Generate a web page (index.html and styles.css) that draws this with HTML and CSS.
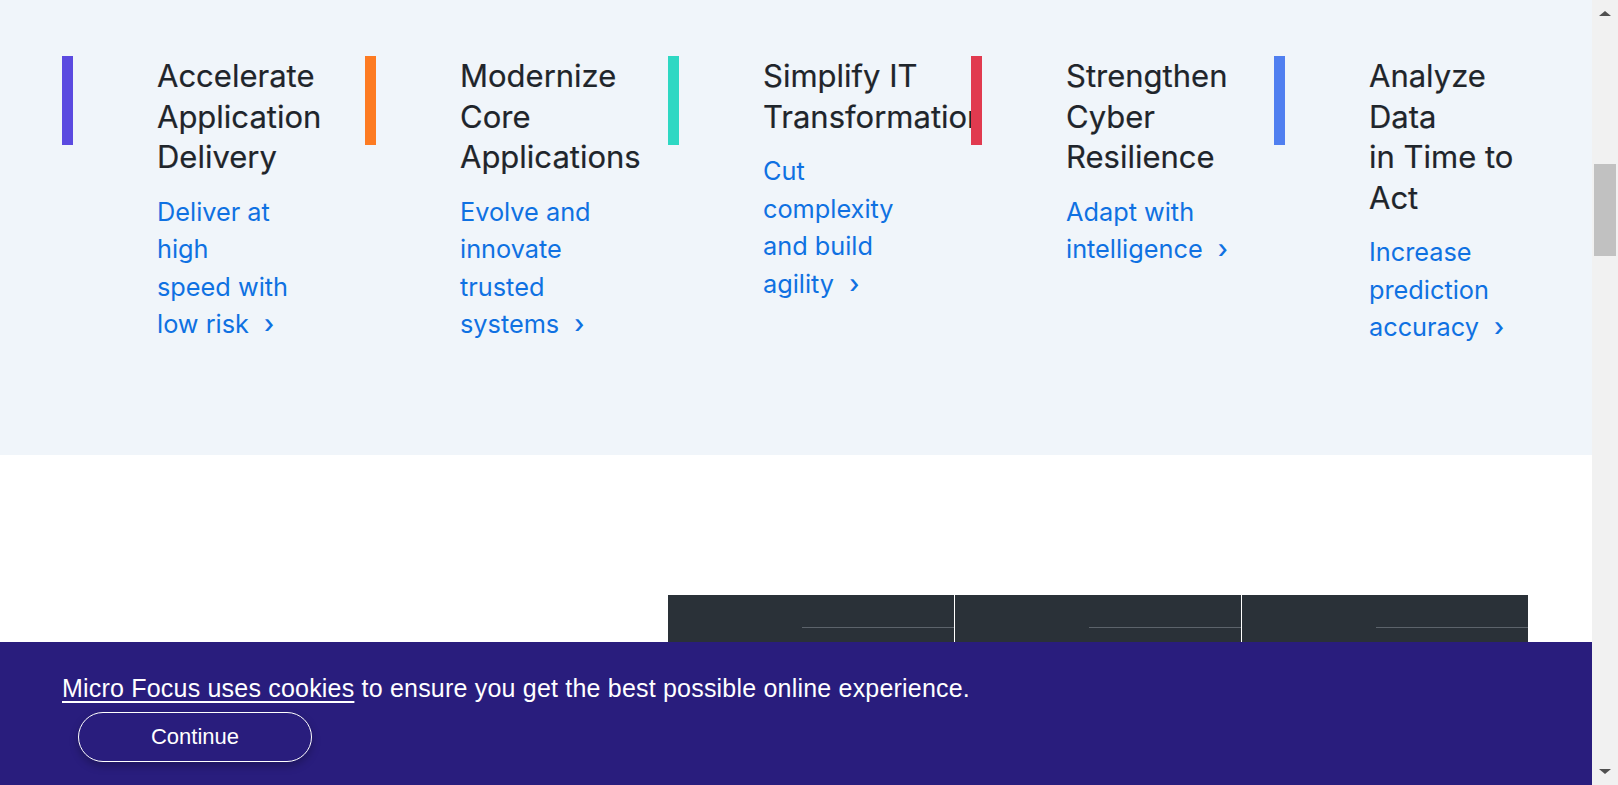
FILE: index.html
```html
<!DOCTYPE html>
<html lang="en">
<head>
<meta charset="utf-8">
<title>Micro Focus</title>
<link rel="stylesheet" href="styles.css">
</head>
<body>
<div class="app">
  <div class="page">
    <section class="features">
      <div class="col">
        <span class="bar bar-purple"></span>
        <div class="text">
          <h3 class="title">Accelerate<br>Application<br>Delivery</h3>
          <a class="link">Deliver at<br>high<br>speed with<br>low risk <span class="chev">›</span></a>
        </div>
      </div>
      <div class="col">
        <span class="bar bar-orange"></span>
        <div class="text">
          <h3 class="title">Modernize<br>Core<br>Applications</h3>
          <a class="link">Evolve and<br>innovate<br>trusted<br>systems <span class="chev">›</span></a>
        </div>
      </div>
      <div class="col">
        <span class="bar bar-teal"></span>
        <div class="text">
          <h3 class="title">Simplify IT<br>Transformation</h3>
          <a class="link">Cut<br>complexity<br>and build<br>agility <span class="chev">›</span></a>
        </div>
      </div>
      <div class="col">
        <span class="bar bar-red"></span>
        <div class="text">
          <h3 class="title">Strengthen<br>Cyber<br>Resilience</h3>
          <a class="link">Adapt with<br>intelligence <span class="chev">›</span></a>
        </div>
      </div>
      <div class="col">
        <span class="bar bar-blue"></span>
        <div class="text">
          <h3 class="title">Analyze<br>Data<br>in Time to<br>Act</h3>
          <a class="link">Increase<br>prediction<br>accuracy <span class="chev">›</span></a>
        </div>
      </div>
    </section>
    <section class="lower">
      <div class="cards">
        <div class="card"><span class="rule"></span></div>
        <div class="card"><span class="rule"></span></div>
        <div class="card"><span class="rule"></span></div>
      </div>
    </section>
    <div class="cookie">
      <p class="cookie-text"><a class="cookie-link">Micro Focus uses cookies</a> to ensure you get the best possible online experience.</p>
      <button class="continue">Continue</button>
    </div>
  </div>
  <div class="scrollbar">
    <span class="arrow arrow-up"></span>
    <div class="track"><span class="thumb"></span></div>
    <span class="arrow arrow-down"></span>
  </div>
</div>
</body>
</html>
```
FILE: styles.css
```css
* { box-sizing: border-box; }
html, body {
  margin: 0;
  padding: 0;
  height: 100%;
  overflow: hidden;
}
body {
  font-family: Inter, "Noto Sans", sans-serif;
  background: #ffffff;
}
.app {
  display: flex;
  height: 785px;
  width: 1618px;
}
.page {
  position: relative;
  width: 1592px;
  height: 785px;
  overflow: hidden;
  background: #ffffff;
}
.features {
  height: 455px;
  background: #f0f5fa;
  display: flex;
  padding: 56px 0 0 62px;
}
.col {
  width: 303px;
  flex: none;
  display: flex;
  align-items: flex-start;
  overflow: hidden;
}
.bar {
  flex: none;
  width: 11px;
  height: 89px;
}
.bar-purple { background: #5b4ae0; }
.bar-orange { background: #fd7b22; }
.bar-teal { background: #2ed8c3; }
.bar-red { background: #e13a4f; }
.bar-blue { background: #507ff0; }
.text {
  margin-left: 84px;
  white-space: nowrap;
}
.title {
  margin: 0;
  font-size: 31px;
  line-height: 40.5px;
  font-weight: 400;
  color: #1f252b;
  -webkit-text-stroke: 0.2px #1f252b;
}
.link {
  display: block;
  margin-top: 15px;
  font-size: 25.3px;
  line-height: 37.5px;
  color: #0f71e2;
  font-weight: 400;
}
.chev {
  font-weight: 500;
  margin-left: 8px;
}
.lower {
  padding: 140px 0 0 668px;
  height: 330px;
}
.cards {
  display: flex;
  gap: 1px;
}
.card {
  width: 286px;
  height: 200px;
  background: #2a3138;
  padding-top: 32px;
  display: flex;
  justify-content: flex-end;
}
.rule {
  display: block;
  width: 152px;
  height: 1px;
  background: #5c636b;
}
.cookie {
  position: absolute;
  left: 0;
  right: 0;
  bottom: 0;
  height: 143px;
  background: #291d7d;
  padding: 33px 0 0 62px;
  font-family: "Liberation Sans", Arial, sans-serif;
}
.cookie-text {
  margin: 0;
  font-size: 25px;
  line-height: 27px;
  letter-spacing: 0.2px;
  color: #ffffff;
}
.cookie-link {
  color: #ffffff;
  text-decoration: underline;
  text-underline-offset: 4px;
}
.continue {
  display: block;
  margin: 10px 0 0 16px;
  width: 234px;
  height: 50px;
  border: 1px solid #ffffff;
  border-radius: 25px;
  background: transparent;
  color: #ffffff;
  font-family: "Liberation Sans", Arial, sans-serif;
  font-size: 22px;
  box-shadow: 0 4px 8px rgba(0, 0, 0, 0.25);
}
.scrollbar {
  width: 26px;
  height: 785px;
  background: #f1f1f1;
  display: flex;
  flex-direction: column;
  align-items: center;
}
.arrow {
  flex: none;
  width: 0;
  height: 0;
  border-left: 6px solid transparent;
  border-right: 6px solid transparent;
}
.arrow-up {
  margin-top: 11px;
  border-bottom: 5px solid #505050;
}
.arrow-down {
  margin-bottom: 11px;
  border-top: 5px solid #505050;
}
.track {
  flex: 1;
  width: 100%;
  padding: 148px 2px 0;
}
.thumb {
  display: block;
  height: 92px;
  background: #c1c1c1;
}
```
